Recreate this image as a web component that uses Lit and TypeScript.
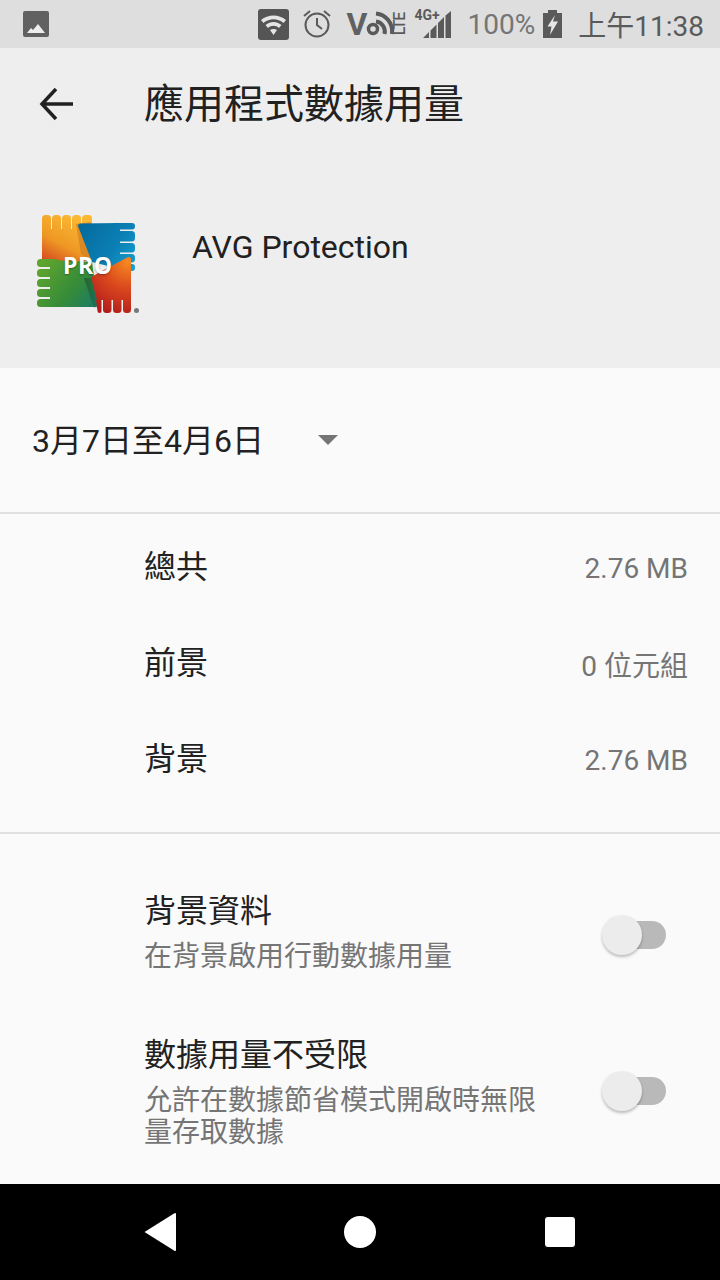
import { LitElement, html, css, svg } from "lit";
import { customElement } from "lit/decorators.js";

const logo = svg`<svg class="logo" width="140" height="130" viewBox="0 0 140 130">
  <defs>
    <linearGradient id="o" gradientUnits="userSpaceOnUse" x1="52" y1="15" x2="26" y2="64"><stop offset="0" stop-color="#fbb833"/><stop offset=".55" stop-color="#ee9824"/><stop offset="1" stop-color="#d3431f"/></linearGradient>
    <linearGradient id="b" gradientUnits="userSpaceOnUse" x1="58" y1="28" x2="115" y2="68"><stop offset="0" stop-color="#056a9c"/><stop offset=".6" stop-color="#0b80b4"/><stop offset="1" stop-color="#17a0d4"/></linearGradient>
    <linearGradient id="g" gradientUnits="userSpaceOnUse" x1="24" y1="62" x2="78" y2="106"><stop offset="0" stop-color="#5fa42e"/><stop offset=".55" stop-color="#378c38"/><stop offset="1" stop-color="#1a7a66"/></linearGradient>
    <radialGradient id="r" gradientUnits="userSpaceOnUse" cx="108" cy="62" r="56"><stop offset="0" stop-color="#f68a20"/><stop offset=".45" stop-color="#dc4a1e"/><stop offset="1" stop-color="#b01a1c"/></radialGradient>
    <linearGradient id="s" x1="0" y1="0" x2="1" y2="0"><stop offset="0" stop-color="#000" stop-opacity=".4"/><stop offset="1" stop-color="#000" stop-opacity="0"/></linearGradient>
  </defs>
  <g fill="url(#o)">
    <rect x="22" y="15" width="9" height="25" rx="3.500"/><rect x="32" y="15" width="9" height="25" rx="3.500"/><rect x="42" y="15" width="9" height="25" rx="3.500"/><rect x="52" y="15" width="9" height="25" rx="3.500"/><rect x="62" y="15" width="10" height="25" rx="3.500"/>
    <path d="M22 29H72V58L58 64H25Q22 64 22 61z"/>
  </g>
  <path fill="#c8741f" opacity=".55" d="M56 24l5 30 12 8-2-40z"/>
  <g fill="url(#b)">
    <rect x="92" y="23" width="23" height="6.500" rx="3"/><rect x="92" y="31" width="23" height="10.500" rx="3.500"/><rect x="92" y="43" width="23" height="9.500" rx="3.500"/><rect x="92" y="54" width="23" height="8.500" rx="3.500"/><rect x="92" y="64" width="23" height="7" rx="3"/>
    <path d="M60 23.500L100 23V69L72 62L58 26Q58 23.500 60 23.500z"/>
  </g>
  <g fill="url(#g)">
    <rect x="17" y="59" width="22" height="8" rx="3.500"/><rect x="17" y="69" width="22" height="8" rx="3.500"/><rect x="17" y="79" width="22" height="8" rx="3.500"/><rect x="17" y="89" width="22" height="8" rx="3.500"/><rect x="17" y="99" width="22" height="8" rx="3.500"/>
    <path d="M30 60L72 62L78 104.500Q78 107 75 107H30z"/>
  </g>
  <path fill="url(#s)" d="M64 78h14l4 30h-8z" opacity=".7"/>
  <g fill="url(#r)">
    <rect x="83" y="90" width="8.500" height="23" rx="3.500"/><rect x="93" y="90" width="8.500" height="23" rx="3.500"/><rect x="103" y="90" width="8" height="23" rx="3.500"/>
    <path d="M71 77L108 57Q111 56.500 111 59V100H80L78.500 106z"/>
    <path d="M76 100h5.500v11q0 2-2 2t-2-2z"/>
  </g>
  <circle cx="116.500" cy="110.500" r="2.500" fill="#777"/>
</svg>`;

@customElement("app-root")
export class AppRoot extends LitElement {
  static styles = css`
    :host { display: block; width: 720px; height: 1280px; overflow: hidden; background: #fafafa;
      font-family: Roboto, "Noto Sans CJK TC", sans-serif; color: #212121; }
    * { box-sizing: border-box; }
    .page { display: flex; flex-direction: column; height: 1280px; }
    .status { height: 48px; flex: none; background: #dedede; display: flex; align-items: center; padding: 0 16px 0 23px; color: #5a5a5a; }
    .status svg { display: block; flex: none; }
    .spacer { flex: 1; }
    .pct { font-size: 28px; color: #757575; margin-left: 17px; }
    .clock { font-size: 28px; color: #5a5a5a; margin-left: 16px; }
    .alarm { margin-left: 14px; }
    .batt { margin-left: 8px; }
    .head { height: 320px; flex: none; background: #eeeeee; display: flex; flex-direction: column; }
    .appbar { height: 112px; display: flex; align-items: center; padding-left: 38px; }
    .title { font-size: 40px; margin-left: 70px; padding-top: 2px; color: #212121; line-height: 1; }
    .appinfo { height: 208px; display: flex; align-items: flex-start; padding-left: 20px; padding-top: 40px; }
    .logo { display: block; flex: none; filter: blur(.4px); }
    .logobox { position: relative; width: 140px; height: 130px; flex: none; }
    .pro { position: absolute; left: 43px; top: 54px; font: 700 23px "Open Sans", Roboto, sans-serif; color: #fff; letter-spacing: .5px; line-height: 1; text-shadow: 0 1px 2px rgba(0,0,0,.35); }
    .appname { font-size: 32px; margin-left: 32px; margin-top: 29px; line-height: 36px; color: #212121; }
    .date { height: 144px; flex: none; display: flex; align-items: center; padding-left: 32px; font-size: 32px; color: #212121; }
    .date span:first-child { padding-bottom: 4px; }
    .caret { width: 0; height: 0; border-left: 10px solid transparent; border-right: 10px solid transparent; border-top: 10px solid #757575; margin-left: 54px; }
    .rule { height: 2px; flex: none; background: #e0e0e0; }
    .rows { padding-top: 6px; height: 318px; flex: none; }
    .row { height: 96px; display: flex; align-items: center; justify-content: space-between; padding: 0 32px 0 144px; }
    .row .k { font-size: 32px; padding-bottom: 8px; }
    .row .v { font-size: 28px; color: #757575; }
    .switches { padding: 55px 0 0 144px; flex: 1; }
    .sw { display: flex; align-items: center; justify-content: space-between; }
    .sw + .sw { margin-top: 52px; }
    .sw .txt { width: 400px; }
    .sw .first { padding-bottom: 8px; }
    .sw .h { font-size: 32px; line-height: 44px; margin-bottom: 8px; }
    .sw .s { font-size: 28px; line-height: 32px; color: #757575; }
    .toggle { position: relative; width: 56px; height: 28px; margin-right: 54px; border-radius: 14px; background: #b9b9b9; flex: none; }
    .toggle::after { content: ""; position: absolute; left: -8px; top: -6px; width: 40px; height: 40px; border-radius: 50%; background: #ececec; box-shadow: 0 2px 3px rgba(0,0,0,.25); }
    .nav { height: 96px; flex: none; background: #000; display: flex; align-items: center; justify-content: center; }
    .nav svg { display: block; }
    .i4g { position: relative; width: 36px; height: 40px; flex: none; margin-left: 9px; }
    .i4g span { position: absolute; left: 0; top: 4px; font-size: 14px; font-weight: 700; line-height: 1; color: #5a5a5a; }
    .i4g svg { position: absolute; left: 0; top: 0; }
    .volte { position: relative; width: 59px; height: 36px; flex: none; margin-left: 16px; }
    .volte b { position: absolute; left: 0; top: 2px; font-size: 32px; line-height: 1; color: #616161; font-weight: 700; }
    .volte svg { position: absolute; left: 0; top: 0; }
    .volte i { position: absolute; left: 53px; top: 17.500px; font-size: 16px; letter-spacing: -1px; font-style: normal; font-weight: 500; line-height: 1; white-space: nowrap; transform: translate(-50%, -50%) rotate(-90deg); color: #5a5a5a; }
  `;

  render() {
    return html`<div class="page">
      <div class="status">
        <svg width="26" height="26" viewBox="0 0 26 26"><rect width="26" height="26" rx="2" fill="#616161"/><path d="M4 22l4-5 2 2 5-6 7 9z" fill="#eee"/></svg>
        <div class="spacer"></div>
        <svg width="31" height="31" viewBox="0 0 31 31"><rect width="31" height="31" rx="3" fill="#555"/><path d="M3 11c7-6 18-6 25 0l-2.500 3c-6-5-14-5-20 0zM7.500 16c5-4 11-4 16 0l-2.500 3c-3-3-8-3-11 0zM12 21c2-1.500 5-1.500 7 0l-3.500 5z" fill="#e6e6e6"/></svg>
        <svg class="alarm" width="28" height="28" viewBox="0 0 28 28" fill="none" stroke="#5a5a5a" stroke-width="2"><circle cx="14" cy="15" r="11.500"/><path d="M14 8v7l5 4M1 6l6-5M27 6l-6-5"/></svg>
        <div class="volte">
          <b>V</b>
          <svg width="59" height="36" viewBox="0 0 59 36" fill="none" stroke="#5a5a5a"><circle cx="26" cy="23" r="4.500" stroke-width="3.500"/><path d="M29 7.500A18 18 0 0 1 45 28M29 15.500A10 10 0 0 1 37.500 28" stroke-width="4"/></svg>
          <i>LTE</i>
        </div>
        <div class="i4g">
          <svg width="36" height="40" viewBox="0 0 36 40" fill="#5a5a5a"><path d="M8 34l6-6v6zM15.500 34v-7.500l6-6V34zM23 34V19l6-6v21zM30.500 34V11.500L36 7v27z"/></svg>
          <span>4G+</span>
        </div>
        <span class="pct">100%</span>
        <svg class="batt" width="19" height="28" viewBox="0 0 19 28"><path d="M5 3V0h9v3h5v25H0V3z" fill="#5a5a5a"/><path d="M12 5L4.500 16.500h4L7 25l8-13.500h-5z" fill="#e6e6e6"/></svg>
        <span class="clock">上午11:38</span>
      </div>
      <div class="head">
        <div class="appbar">
          <svg width="36" height="36" viewBox="0 0 36 36" fill="none" stroke="#212121" stroke-width="3.500"><path d="M35 18H5M18 3L4 18l14 15"/></svg>
          <span class="title">應用程式數據用量</span>
        </div>
        <div class="appinfo">
          <div class="logobox">${logo}<span class="pro">PRO</span></div>
          <span class="appname">AVG Protection</span>
        </div>
      </div>
      <div class="date"><span>3月7日至4月6日</span><span class="caret"></span></div>
      <div class="rule"></div>
      <div class="rows">
        <div class="row"><span class="k">總共</span><span class="v">2.76 MB</span></div>
        <div class="row"><span class="k">前景</span><span class="v">0 位元組</span></div>
        <div class="row"><span class="k">背景</span><span class="v">2.76 MB</span></div>
      </div>
      <div class="rule"></div>
      <div class="switches">
        <div class="sw"><div class="txt first"><div class="h">背景資料</div><div class="s">在背景啟用行動數據用量</div></div><div class="toggle"></div></div>
        <div class="sw"><div class="txt"><div class="h">數據用量不受限</div><div class="s">允許在數據節省模式開啟時無限量存取數據</div></div><div class="toggle"></div></div>
      </div>
      <div class="nav">
        <svg width="432" height="40" viewBox="0 0 432 40" fill="#fff"><path d="M.5 20L30 1.500c1.500-1 2-.5 2 1v35c0 1.500-.5 2-2 1z"/><circle cx="216" cy="20" r="16"/><rect x="401" y="5" width="30" height="30" rx="3"/></svg>
      </div>
    </div>`;
  }
}
